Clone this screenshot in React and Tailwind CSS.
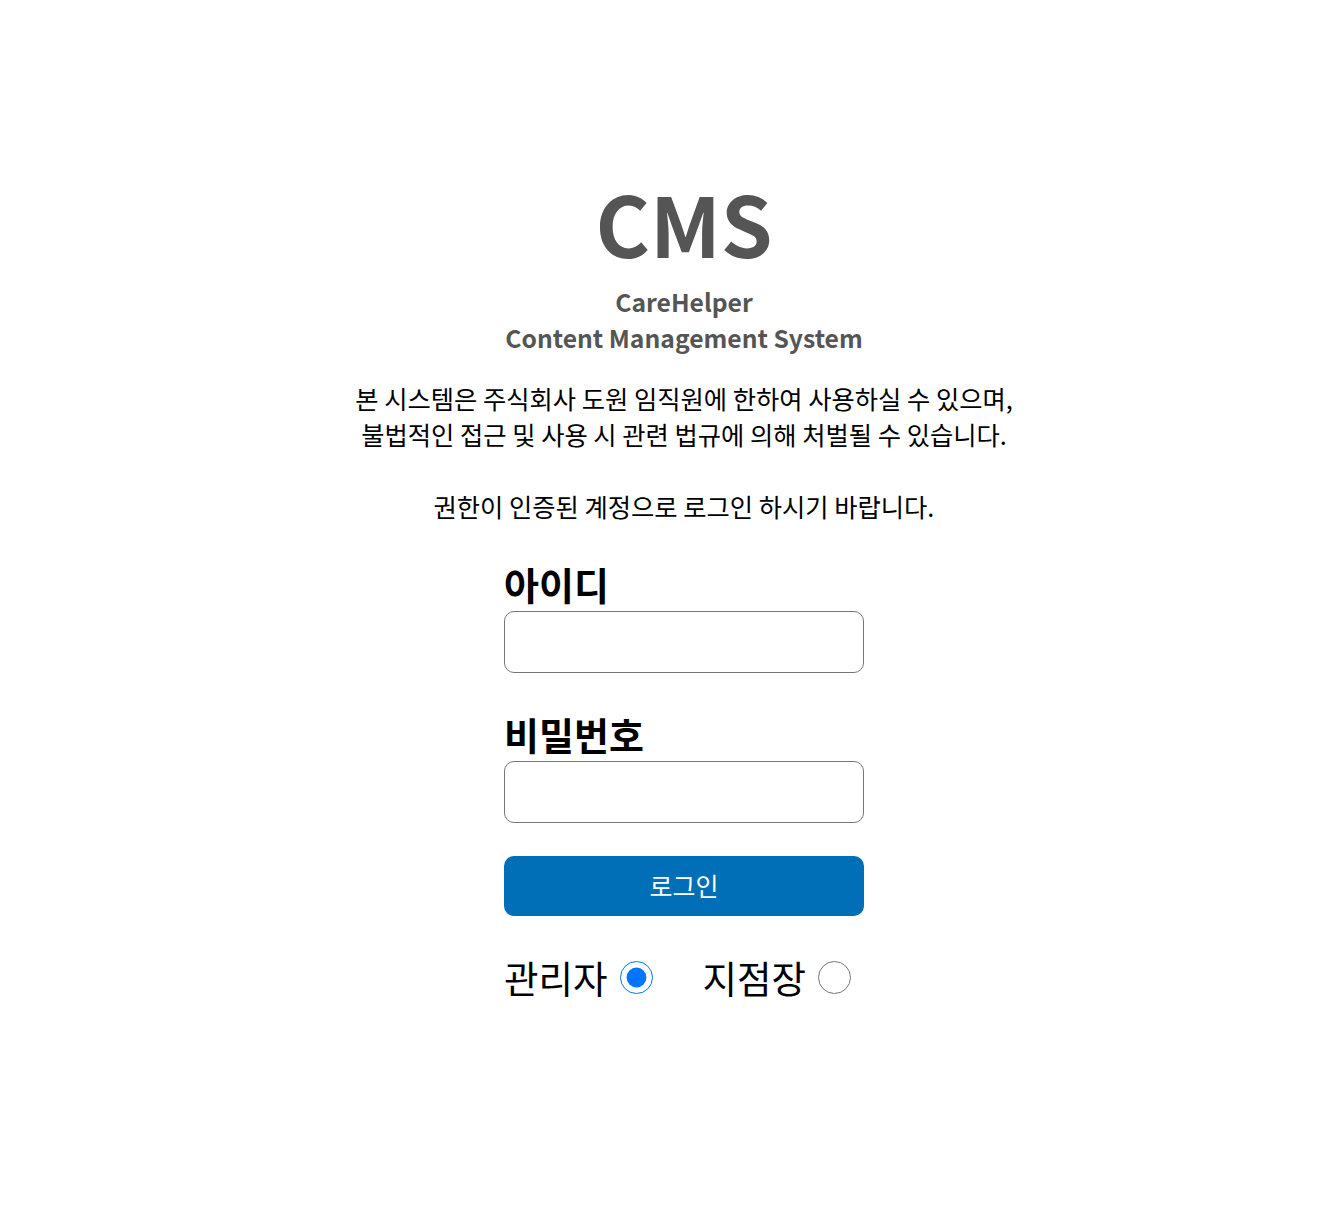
import { useState } from 'react'

export default function App() {
  const [role, setRole] = useState('admin')
  return (
    <div className="min-h-screen bg-white flex flex-col items-center pt-[169px] pl-[30px] text-black"
      style={{ fontFamily: '"Noto Sans CJK KR", "Noto Sans", sans-serif' }}>
      <h1 className="text-[83px] font-bold leading-none text-[#555555] py-[12px]">CMS</h1>
      <div className="mt-[7px] text-center text-[24.7px] leading-[36px] font-semibold text-[#555555]">
        CareHelper<br />Content Management System
      </div>
      <p className="mt-[25px] text-center text-[25.3px] leading-[36px]">
        본 시스템은 주식회사 도원 임직원에 한하여 사용하실 수 있으며,<br />
        불법적인 접근 및 사용 시 관련 법규에 의해 처벌될 수 있습니다.<br />
        <br />
        권한이 인증된 계정으로 로그인 하시기 바랍니다.
      </p>

      <form className="mt-[37px] w-[360px] flex flex-col" onSubmit={e => e.preventDefault()}>
        <label className="text-[38px] font-bold leading-[46px] pb-[4px]">아이디</label>
        <input className="h-[62px] border border-[#767676] rounded-[10px] px-3 text-[20px] outline-none" />
        <label className="mt-[38px] text-[38px] font-bold leading-[46px] pb-[4px]">비밀번호</label>
        <input type="password" className="h-[62px] border border-[#767676] rounded-[10px] px-3 text-[20px] outline-none" />
        <button className="mt-[33px] h-[60px] rounded-[10px] bg-[#006fb7] text-white text-[25px]">로그인</button>
        <div className="mt-[37px] flex items-center">
          <label className="flex items-center text-[37.5px] leading-[48px] cursor-pointer">
            관리자
            <input type="radio" name="role" checked={role === 'admin'} onChange={() => setRole('admin')}
              className="ml-[12px] w-[33px] h-[33px] accent-[#0075ff]" />
          </label>
          <label className="ml-[50px] flex items-center text-[37.5px] leading-[48px] cursor-pointer">
            지점장
            <input type="radio" name="role" checked={role === 'branch'} onChange={() => setRole('branch')}
              className="ml-[12px] w-[33px] h-[33px] accent-[#0075ff]" />
          </label>
        </div>
      </form>
    </div>
  )
}
